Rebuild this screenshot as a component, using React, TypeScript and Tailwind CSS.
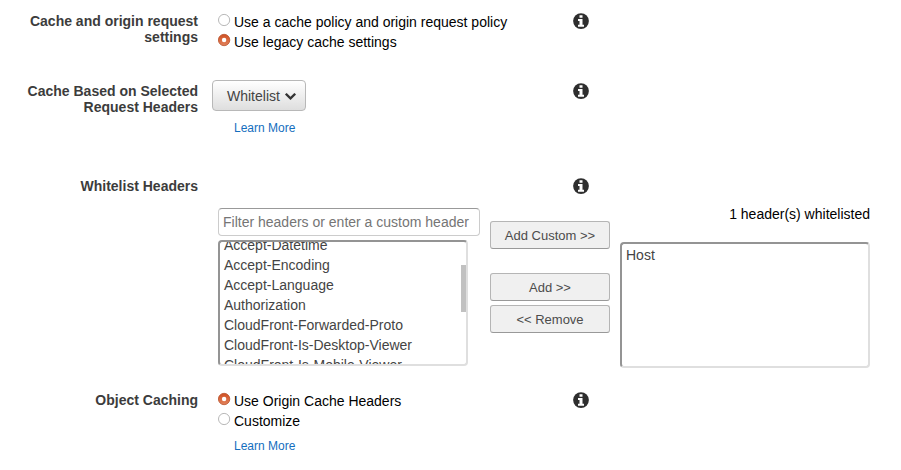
import type { ReactNode } from "react";

const HEADERS = [
  "Accept-Datetime",
  "Accept-Encoding",
  "Accept-Language",
  "Authorization",
  "CloudFront-Forwarded-Proto",
  "CloudFront-Is-Desktop-Viewer",
  "CloudFront-Is-Mobile-Viewer",
];

function InfoIcon() {
  return (
    <svg className="mt-px size-4 shrink-0" viewBox="0 0 16 16">
      <circle cx="8" cy="8.1" r="7.9" fill="#2e2e2e" />
      <path d="M6.5 2.2h3v2.6h-3zM5 6h4.5v5.7H11v2H5v-2h1.5V8H5z" fill="#fff" />
    </svg>
  );
}

function Chevron() {
  return (
    <svg className="mt-0.5 ml-[5px] h-[7px] w-[11px]" viewBox="90 533 1612 1035" fill="#333">
      <path d="M1683 808l-742 741q-19 19-45 19t-45-19l-742-741q-19-19-19-45.5t19-45.5l166-165q19-19 45-19t45 19l531 531 531-531q19-19 45-19t45 19l166 165q19 19 19 45.5t-19 45.5z" />
    </svg>
  );
}

function Radio({ label, checked }: { label: string; checked?: boolean }) {
  return (
    <label className="flex h-5 items-start text-black">
      <svg className="mt-px mr-[3px] h-[14px] w-[13px] shrink-0" viewBox="0 0 13 14">
        <defs>
          <linearGradient id="radioFill" x1="0" y1="0" x2="0" y2="1">
            <stop offset="0" stopColor="#cf4f22" />
            <stop offset="1" stopColor="#e2835c" />
          </linearGradient>
        </defs>
        {checked ? (
          <>
            <circle cx="6.1" cy="7" r="5.7" fill="url(#radioFill)" stroke="#b9522c" strokeWidth="0.8" />
            <circle cx="6.1" cy="7" r="2.2" fill="#fff" />
          </>
        ) : (
          <circle cx="6.1" cy="7" r="5.6" fill="#fff" stroke="#b8b8b8" strokeWidth="1" />
        )}
      </svg>
      <span className="whitespace-nowrap">{label}</span>
    </label>
  );
}

function Row({ label, className, children }: { label: ReactNode; className: string; children?: ReactNode }) {
  return (
    <div className={`flex ${className}`}>
      <div className="w-[198px] shrink-0 pt-px text-right font-bold leading-4 text-[#3c3c3c]">{label}</div>
      <div className="w-[375px] shrink-0">{children}</div>
      <InfoIcon />
    </div>
  );
}

function PushButton({ children, className = "" }: { children: ReactNode; className?: string }) {
  return (
    <button
      className={`h-7 w-[120px] rounded-[3px] border border-[#b5b5b5] border-b-[#999] bg-[#f0f0f0] pt-0.5 text-[13px] leading-5 text-[#4c4c4c] ${className}`}
    >
      {children}
    </button>
  );
}

function LearnMore() {
  return <a className="block text-xs leading-4 text-[#146ebe]">Learn More</a>;
}

export default function App() {
  return (
    <div className="h-[470px] w-[901px] overflow-hidden bg-white pt-3 font-['Liberation_Sans',Arial,sans-serif] text-sm leading-5">
      <Row className="h-[70px]" label={<>Cache and origin request<br />settings</>}>
        <div className="pl-5">
          <Radio label="Use a cache policy and origin request policy" />
          <Radio label="Use legacy cache settings" checked />
        </div>
      </Row>

      <Row className="h-[95px]" label={<>Cache Based on Selected<br />Request Headers</>}>
        <div className="-mt-0.5 pl-[14px]">
          <button className="flex h-[31px] w-[94px] items-center rounded-[4px] border border-[#b8b8b8] bg-linear-to-b from-white to-[#dedede] pl-[14px] text-[#444]">
            Whitelist
            <Chevron />
          </button>
          <div className="mt-[9px] pl-[22px]">
            <LearnMore />
          </div>
        </div>
      </Row>

      <Row className="h-[31px]" label="Whitelist Headers" />

      <div className="flex h-[183px] pl-[218px]">
        <div className="w-[262px]">
          <input
            className="block h-7 w-[262px] rounded-[4px] border border-[#ccc] border-t-[#999] px-1 text-[#444] placeholder:text-[#757575] placeholder:opacity-100"
            placeholder="Filter headers or enter a custom header"
          />
          <div className="mt-1 flex h-[126px] w-[250px] justify-between overflow-hidden rounded-[4px] border-2 border-t-[#949494] border-r-[#dfdfdf] border-b-[#dfdfdf] border-l-[#949494] pl-1 text-[#444]">
            <ul className="-mt-[7px]">
              {HEADERS.map((h) => (
                <li key={h} className="h-5 whitespace-nowrap">{h}</li>
              ))}
            </ul>
            <div className="mt-[23px] h-[47px] w-[5px] bg-[#c1c1c1]" />
          </div>
        </div>
        <div className="ml-[10px] flex w-[120px] flex-col pt-[13px]">
          <PushButton>Add Custom &gt;&gt;</PushButton>
          <PushButton className="mt-6">Add &gt;&gt;</PushButton>
          <PushButton className="mt-1">&lt;&lt; Remove</PushButton>
        </div>
        <div className="ml-[10px] w-[250px]">
          <div className="-mt-1 text-right text-black">1 header(s) whitelisted</div>
          <div className="mt-[18px] h-[126px] rounded-[4px] border-2 border-t-[#949494] border-r-[#dfdfdf] border-b-[#dfdfdf] border-l-[#949494] pt-px pl-1 text-[#444]">
            Host
          </div>
        </div>
      </div>

      <Row className="h-[79px]" label="Object Caching">
        <div className="pl-5">
          <Radio label="Use Origin Cache Headers" checked />
          <Radio label="Customize" />
          <div className="mt-[7px] pl-4">
            <LearnMore />
          </div>
        </div>
      </Row>
    </div>
  );
}
